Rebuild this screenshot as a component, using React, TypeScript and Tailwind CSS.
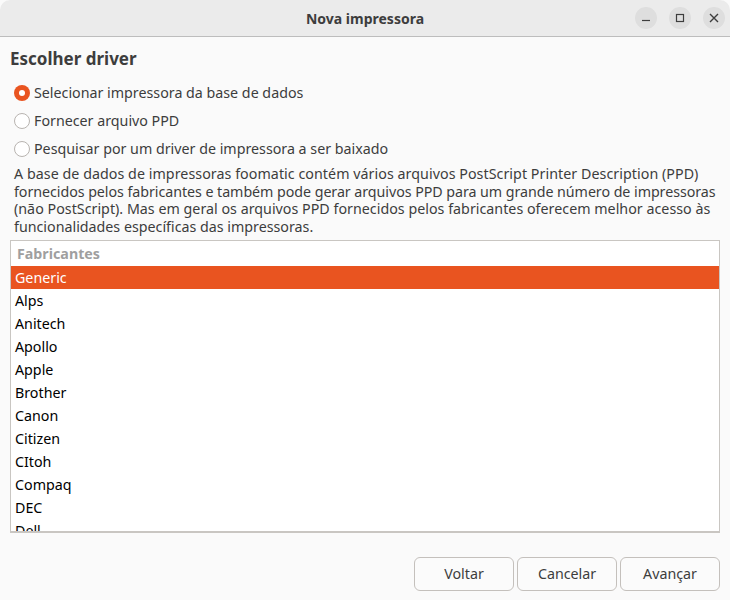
import React from 'react';

const manufacturers = ['Alps', 'Anitech', 'Apollo', 'Apple', 'Brother', 'Canon', 'Citizen', 'CItoh', 'Compaq', 'DEC', 'Dell'];

const RadioRow = ({ label, checked = false }: { label: string; checked?: boolean }) => (
  <div className="flex items-center h-[28px] pl-[14px] gap-[4px]">
    {checked ? (
      <span className="w-[16px] h-[16px] rounded-full bg-[#e95420] flex items-center justify-center">
        <span className="w-[6px] h-[6px] rounded-full bg-white"></span>
      </span>
    ) : (
      <span className="w-[16px] h-[16px] rounded-full bg-white border border-[#b8b4b0]"></span>
    )}
    <span>{label}</span>
  </div>
);

const WindowButton = ({ children }: { children: React.ReactNode }) => (
  <div className="w-[22px] h-[22px] rounded-full bg-[#dedede] flex items-center justify-center">
    <svg width="16" height="16" viewBox="0 0 16 16" fill="none" stroke="#3d3d3d" strokeWidth="1.2">
      {children}
    </svg>
  </div>
);

const FooterButton = ({ label }: { label: string }) => (
  <button className="w-[100px] h-[34px] rounded-[6px] border border-[#c4c0bc] bg-[#fbfbfb] text-[#3d3d3d]">
    {label}
  </button>
);

export default function App() {
  return (
    <div className="w-[730px] h-[600px] overflow-hidden flex flex-col bg-[#fafafa] text-[14.25px] text-[#3d3d3d] font-['Noto_Sans',sans-serif]">
      {/* Title bar */}
      <div className="relative h-[37px] shrink-0 rounded-t-[10px] bg-[#ebebeb] border-b border-[#bdbdbd] flex items-center justify-center">
        <span className="font-bold text-[14px]">Nova impressora</span>
        <div className="absolute right-[5px] top-[7px] flex gap-[12px]">
          <WindowButton>
            <path d="M4 10.5h8" />
          </WindowButton>
          <WindowButton>
            <rect x="4.5" y="4.5" width="7" height="7" />
          </WindowButton>
          <WindowButton>
            <path d="M4 4l8 8M12 4l-8 8" strokeWidth="1.4" />
          </WindowButton>
        </div>
      </div>

      <h1 className="mt-[10px] ml-[10px] h-[24px] leading-[24px] font-bold text-[17px]">Escolher driver</h1>

      <div className="mt-[8px]">
        <RadioRow label="Selecionar impressora da base de dados" checked />
        <RadioRow label="Fornecer arquivo PPD" />
        <RadioRow label="Pesquisar por um driver de impressora a ser baixado" />
      </div>

      <p className="mx-[14px] mt-[2px] leading-[17.5px] whitespace-nowrap">
        <span className="tracking-[0.05px]">A base de dados de impressoras foomatic contém vários arquivos PostScript Printer Description (PPD)</span>
        <br />
        <span className="tracking-[-0.05px]">fornecidos pelos fabricantes e também pode gerar arquivos PPD para um grande número de impressoras</span>
        <br />
        <span className="tracking-[0.02px]">(não PostScript). Mas em geral os arquivos PPD fornecidos pelos fabricantes oferecem melhor acesso às</span>
        <br />
        funcionalidades específicas das impressoras.
      </p>

      {/* Manufacturer list */}
      <div className="mx-[10px] mt-[5px] h-[293px] shrink-0 overflow-hidden border border-[#c9c6c2] border-b-2 bg-white">
        <div className="h-[25px] leading-[25px] pl-[6px] font-bold text-[#9f9f9f]">Fabricantes</div>
        <div className="h-[23px] leading-[23px] pl-[4px] bg-[#e95420] text-white">Generic</div>
        {manufacturers.map((name) => (
          <div key={name} className="h-[23px] leading-[23px] pl-[4px] text-black">
            {name}
          </div>
        ))}
      </div>

      <div className="mt-[24px] mr-[10px] flex justify-end gap-[3px]">
        <FooterButton label="Voltar" />
        <FooterButton label="Cancelar" />
        <FooterButton label="Avançar" />
      </div>
    </div>
  );
}
